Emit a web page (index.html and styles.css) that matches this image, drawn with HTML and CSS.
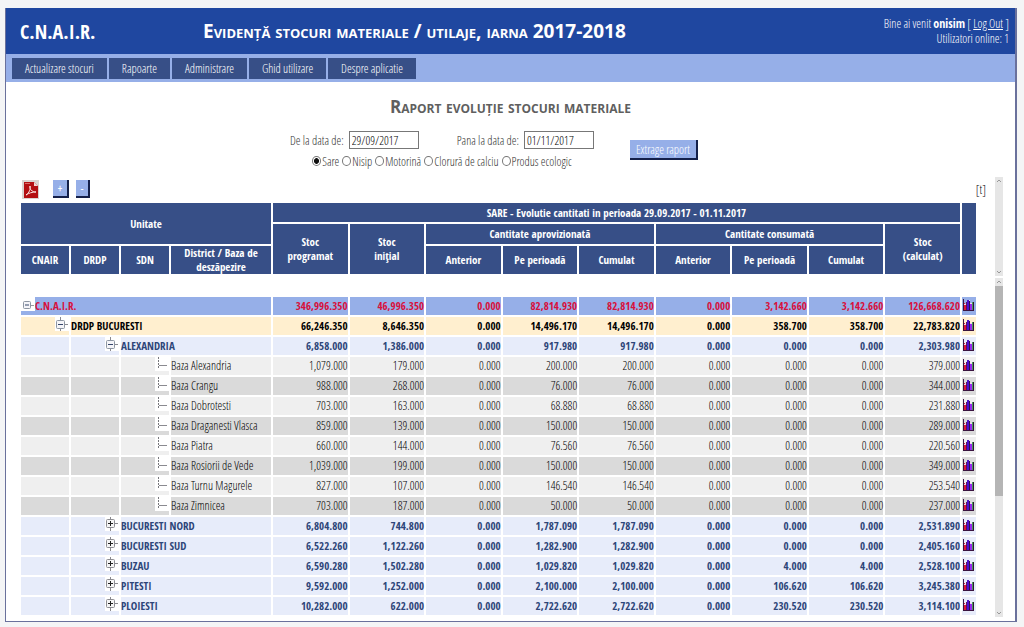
FILE: index.html
```html
<!DOCTYPE html>
<html lang="ro">
<head>
<meta charset="utf-8">
<title>C.N.A.I.R. - Raport evoluție stocuri materiale</title>
<link rel="stylesheet" href="styles.css">
</head>
<body>
<svg class="sprite" aria-hidden="true">
<symbol id="chart" viewBox="0 0 11 13">
<path fill="#e9d9ef" d="M1 5h2V3h2V1h2v3h4v7H1z"/>
<path fill="#3a1440" d="M0 0h1v12H0zM0 11h11v1H0z"/>
<path fill="#e01838" d="M1 4h1v1H1zM1 6h2v5H1z"/>
<path fill="#5a1060" d="M3 3h1v8H3z"/>
<path fill="#4c10d0" d="M4 1h2v10H4z"/>
<path fill="#33104f" d="M6 2h1v9H6z"/>
<path fill="#9a2bf0" d="M7 5h2v6H7z"/>
<path fill="#4c9a5c" d="M9 3h1v8H9z"/>
<path fill="#241a2e" d="M10 3h1v8h-1z"/>
</symbol>
<symbol id="minus-root" viewBox="0 0 14 14">
<path fill="#fff" d="M0 0h14v14H0z"/>
<rect x="2.500" y="4.500" width="7" height="7" rx="1" fill="#f4f4f8" stroke="#8d96a3"/>
<path fill="#34466b" d="M4 7.500h4v1H4z"/><path fill="#9a9aa0" d="M10 8h3v1h-3z"/>
</symbol>
<symbol id="minus" viewBox="0 0 14 14">
<path fill="#fff" d="M0 0h14v14H0z"/>
<path fill="#8a8a90" d="M5 0h1v14H5zM10 7h3v1h-3z"/>
<rect x="1.500" y="3.500" width="8" height="8" rx="1" fill="#f4f4f8" stroke="#8d96a3"/>
<path fill="#34466b" d="M3 7h5v1H3z"/>
</symbol>
<symbol id="plus" viewBox="0 0 14 14">
<path fill="#fff" d="M0 0h14v14H0z"/>
<path fill="#8a8a90" d="M5 0h1v14H5zM10 6h3v1h-3z"/>
<rect x="1.500" y="2.500" width="8" height="8" rx="1" fill="#f4f4f4" stroke="#8d8d92"/>
<path fill="#222" d="M3 6h5v1H3zM5 4h1v5H5z"/>
</symbol>
<symbol id="branch" viewBox="0 0 14 14">
<path fill="#fff" d="M0 0h14v14H0z"/>
<path fill="none" stroke="#77777c" stroke-dasharray="2 1" d="M3.500 0v11"/><path fill="#8a8a90" d="M4 8h8v1H4z"/>
</symbol>
</svg>
<div class="frame">
<header class="banner">
<div class="logo">C.N.A.I.R.</div>
<h1 class="app-title">Evidență stocuri materiale / utilaje, iarna 2017-2018</h1>
<div class="user">Bine ai venit <b>onisim</b> [ <a href="#">Log Out</a> ]<br>Utilizatori online: 1</div>
</header>
<nav class="menu">
<a href="#">Actualizare stocuri</a><a href="#">Rapoarte</a><a href="#">Administrare</a><a href="#">Ghid utilizare</a><a href="#">Despre aplicatie</a>
</nav>
<main>
<h2 class="report-title">Raport evoluție stocuri materiale</h2>
<form class="filters">
<div class="fields">
<div class="dates">
<div class="date"><label for="from">De la data de:</label><input id="from" type="text" value="29/09/2017"></div>
<div class="date"><label for="to">Pana la data de:</label><input id="to" type="text" value="01/11/2017"></div>
</div>
<div class="materials">
<label><input type="radio" name="m" checked>Sare</label>
<label><input type="radio" name="m">Nisip</label>
<label><input type="radio" name="m">Motorină</label>
<label><input type="radio" name="m">Clorură de calciu</label>
<label><input type="radio" name="m">Produs ecologic</label>
</div>
</div>
<button type="button" class="btn extract">Extrage raport</button>
</form>
<section class="panel">
<div class="panel-body">
<div class="tools">
<button type="button" class="pdf" aria-label="PDF"><svg viewBox="0 0 17 19" width="17" height="19"><path fill="#d9d3d0" d="M0 0h17v19H0z"/><path fill="#b30f12" d="M2 2h10l4 4v12H2z"/><path fill="#f1d4d2" d="M12 2v4h4z"/><path fill="#d86a66" d="M3 3h5v1H3z"/><path fill="none" stroke="#fbe3e1" d="M4 15c3-2 5-6 4-9-1 3 2 6 6 6-4 0-7 1-10 3z"/></svg></button>
<button type="button" class="btn fold">+</button>
<button type="button" class="btn fold short">-</button>
<span class="unit">[t]</span>
</div>
<table class="grid head">
<colgroup><col class="c-s"><col class="c-s"><col class="c-s"><col class="c-d"><col span="9"><col class="c-g"></colgroup>
<thead>
<tr class="h1"><th colspan="4" rowspan="2">Unitate</th><th colspan="9">SARE - Evolutie cantitati in perioada 29.09.2017 - 01.11.2017</th><th rowspan="3"></th></tr>
<tr class="h2"><th rowspan="2">Stoc<br>programat</th><th rowspan="2">Stoc<br>inițial</th><th colspan="3">Cantitate aprovizionată</th><th colspan="3">Cantitate consumată</th><th rowspan="2">Stoc<br>(calculat)</th></tr>
<tr class="h3"><th>CNAIR</th><th>DRDP</th><th>SDN</th><th>District / Baza de deszăpezire</th><th>Anterior</th><th>Pe perioadă</th><th>Cumulat</th><th>Anterior</th><th>Pe perioadă</th><th>Cumulat</th></tr>
</thead>
</table>
</div>
<div class="bar"><svg viewBox="0 0 8 8"><path d="M2 5l2-2 2 2"/></svg><svg viewBox="0 0 8 8"><path d="M2 3l2 2 2-2"/></svg></div>
</section>
<section class="panel">
<div class="panel-body list">
<table class="grid data">
<colgroup><col class="c-s"><col class="c-s"><col class="c-s"><col class="c-d"><col span="9"><col class="c-g"></colgroup>
<tbody>
<tr class="root"><td colspan="4" class="name"><svg class="node"><use href="#minus-root"/></svg>C.N.A.I.R.</td><td>346,996.350</td><td>46,996.350</td><td>0.000</td><td>82,814.930</td><td>82,814.930</td><td>0.000</td><td>3,142.660</td><td>3,142.660</td><td>126,668.620</td><td><svg class="chart"><use href="#chart"/></svg></td></tr>
<tr class="region"><td><svg class="node"><use href="#minus"/></svg></td><td colspan="3" class="name">DRDP BUCURESTI</td><td>66,246.350</td><td>8,646.350</td><td>0.000</td><td>14,496.170</td><td>14,496.170</td><td>0.000</td><td>358.700</td><td>358.700</td><td>22,783.820</td><td><svg class="chart"><use href="#chart"/></svg></td></tr>
<tr class="section"><td></td><td><svg class="node"><use href="#minus"/></svg></td><td colspan="2" class="name">ALEXANDRIA</td><td>6,858.000</td><td>1,386.000</td><td>0.000</td><td>917.980</td><td>917.980</td><td>0.000</td><td>0.000</td><td>0.000</td><td>2,303.980</td><td><svg class="chart"><use href="#chart"/></svg></td></tr>
<tr><td></td><td></td><td><svg class="node"><use href="#branch"/></svg></td><td class="name">Baza Alexandria</td><td>1,079.000</td><td>179.000</td><td>0.000</td><td>200.000</td><td>200.000</td><td>0.000</td><td>0.000</td><td>0.000</td><td>379.000</td><td><svg class="chart"><use href="#chart"/></svg></td></tr>
<tr class="alt"><td></td><td></td><td><svg class="node"><use href="#branch"/></svg></td><td class="name">Baza Crangu</td><td>988.000</td><td>268.000</td><td>0.000</td><td>76.000</td><td>76.000</td><td>0.000</td><td>0.000</td><td>0.000</td><td>344.000</td><td><svg class="chart"><use href="#chart"/></svg></td></tr>
<tr><td></td><td></td><td><svg class="node"><use href="#branch"/></svg></td><td class="name">Baza Dobrotesti</td><td>703.000</td><td>163.000</td><td>0.000</td><td>68.880</td><td>68.880</td><td>0.000</td><td>0.000</td><td>0.000</td><td>231.880</td><td><svg class="chart"><use href="#chart"/></svg></td></tr>
<tr class="alt"><td></td><td></td><td><svg class="node"><use href="#branch"/></svg></td><td class="name">Baza Draganesti Vlasca</td><td>859.000</td><td>139.000</td><td>0.000</td><td>150.000</td><td>150.000</td><td>0.000</td><td>0.000</td><td>0.000</td><td>289.000</td><td><svg class="chart"><use href="#chart"/></svg></td></tr>
<tr><td></td><td></td><td><svg class="node"><use href="#branch"/></svg></td><td class="name">Baza Piatra</td><td>660.000</td><td>144.000</td><td>0.000</td><td>76.560</td><td>76.560</td><td>0.000</td><td>0.000</td><td>0.000</td><td>220.560</td><td><svg class="chart"><use href="#chart"/></svg></td></tr>
<tr class="alt"><td></td><td></td><td><svg class="node"><use href="#branch"/></svg></td><td class="name">Baza Rosiorii de Vede</td><td>1,039.000</td><td>199.000</td><td>0.000</td><td>150.000</td><td>150.000</td><td>0.000</td><td>0.000</td><td>0.000</td><td>349.000</td><td><svg class="chart"><use href="#chart"/></svg></td></tr>
<tr><td></td><td></td><td><svg class="node"><use href="#branch"/></svg></td><td class="name">Baza Turnu Magurele</td><td>827.000</td><td>107.000</td><td>0.000</td><td>146.540</td><td>146.540</td><td>0.000</td><td>0.000</td><td>0.000</td><td>253.540</td><td><svg class="chart"><use href="#chart"/></svg></td></tr>
<tr class="alt"><td></td><td></td><td><svg class="node"><use href="#branch"/></svg></td><td class="name">Baza Zimnicea</td><td>703.000</td><td>187.000</td><td>0.000</td><td>50.000</td><td>50.000</td><td>0.000</td><td>0.000</td><td>0.000</td><td>237.000</td><td><svg class="chart"><use href="#chart"/></svg></td></tr>
<tr class="section"><td></td><td><svg class="node"><use href="#plus"/></svg></td><td colspan="2" class="name">BUCURESTI NORD</td><td>6,804.800</td><td>744.800</td><td>0.000</td><td>1,787.090</td><td>1,787.090</td><td>0.000</td><td>0.000</td><td>0.000</td><td>2,531.890</td><td><svg class="chart"><use href="#chart"/></svg></td></tr>
<tr class="section"><td></td><td><svg class="node"><use href="#plus"/></svg></td><td colspan="2" class="name">BUCURESTI SUD</td><td>6,522.260</td><td>1,122.260</td><td>0.000</td><td>1,282.900</td><td>1,282.900</td><td>0.000</td><td>0.000</td><td>0.000</td><td>2,405.160</td><td><svg class="chart"><use href="#chart"/></svg></td></tr>
<tr class="section"><td></td><td><svg class="node"><use href="#plus"/></svg></td><td colspan="2" class="name">BUZAU</td><td>6,590.280</td><td>1,502.280</td><td>0.000</td><td>1,029.820</td><td>1,029.820</td><td>0.000</td><td>4.000</td><td>4.000</td><td>2,528.100</td><td><svg class="chart"><use href="#chart"/></svg></td></tr>
<tr class="section"><td></td><td><svg class="node"><use href="#plus"/></svg></td><td colspan="2" class="name">PITESTI</td><td>9,592.000</td><td>1,252.000</td><td>0.000</td><td>2,100.000</td><td>2,100.000</td><td>0.000</td><td>106.620</td><td>106.620</td><td>3,245.380</td><td><svg class="chart"><use href="#chart"/></svg></td></tr>
<tr class="section"><td></td><td><svg class="node"><use href="#plus"/></svg></td><td colspan="2" class="name">PLOIESTI</td><td>10,282.000</td><td>622.000</td><td>0.000</td><td>2,722.620</td><td>2,722.620</td><td>0.000</td><td>230.520</td><td>230.520</td><td>3,114.100</td><td><svg class="chart"><use href="#chart"/></svg></td></tr>
</tbody>
</table>
</div>
<div class="bar"><svg viewBox="0 0 8 8"><path d="M2 5l2-2 2 2"/></svg><div class="thumb"></div><svg viewBox="0 0 8 8"><path d="M2 3l2 2 2-2"/></svg></div>
</section>
</main>
</div>
</body>
</html>
```
FILE: styles.css
```css
* { box-sizing: border-box; }
body {
  margin: 0;
  padding: 8px 7px 7px 5px;
  background: #f4f5f6;
  color: #000;
  font: 12px/15px "Open Sans Condensed Light", "Liberation Sans Narrow", "Noto Sans", sans-serif;
}
b, th, .logo, .root, .region, .section { font-family: "Open Sans Condensed", "Liberation Sans Narrow", "Noto Sans", sans-serif; font-weight: bold; }
th, .root, .region, .section { font-size: 11px; }
.sprite { display: none; }
.frame {
  background: #fff;
  border: solid #6a719c;
  border-width: 0 2px 1px 1px;
}
.banner {
  display: flex;
  align-items: center;
  height: 46px;
  padding: 0 6px 0 14px;
  background: #1f47a0;
  color: #fff;
}
.logo { flex: 0 0 183px; font-size: 20px; }
.app-title {
  margin: 0;
  font: bold small-caps 19px/24px "Open Sans", "Noto Sans", sans-serif;
  white-space: nowrap;
}
.user { margin-left: auto; text-align: right; white-space: nowrap; }
.user a { color: inherit; }
.menu {
  display: flex;
  gap: 2px;
  height: 28px;
  padding: 4px 6px 3px;
  background: #96afe8;
}
.menu a {
  padding: 3px 13px;
  background: #374f87;
  color: #fff;
  text-decoration: none;
}
.report-title {
  margin: 0;
  padding-top: 15px;
  font: bold small-caps 17px/20px "Open Sans", "Noto Sans", sans-serif;
  text-align: center;
  color: #5f5f5f;
}
.filters {
  display: flex;
  justify-content: center;
  align-items: center;
  gap: 36px;
  margin: 14px 33px 0 0;
  color: #333;
}
.dates { display: flex; gap: 38px; }
.date { display: flex; align-items: center; gap: 5px; }
.date input {
  width: 70px;
  height: 18px;
  padding: 0 2px;
  border: 1px solid #777;
  color: #000;
  font: inherit;
}
.materials { display: flex; justify-content: center; gap: 3px; margin-top: 5px; }
.materials label { display: flex; align-items: center; gap: 1px; }
.materials input {
  appearance: none;
  width: 9px;
  height: 10px;
  margin: 0 0 2px;
  border: 1px solid #777;
  border-radius: 50%;
}
.materials input:checked { background: radial-gradient(#111 45%, #fff 55%); }
.btn {
  padding: 0;
  border: solid #14204a;
  border-width: 0 2px 2px 0;
  background: #96afe8;
  color: #fff;
  font: inherit;
}
.extract { width: 68px; height: 20px; }
.panel { display: flex; justify-content: space-between; gap: 17px; padding: 0 12px 0 15px; margin-bottom: 2px; }
.panel + .panel { margin-bottom: 4px; }
.filters + .panel { margin-top: 8px; }
.panel-body { flex: 1; }
.tools { display: flex; align-items: center; height: 26px; margin-right: -8px; padding: 0 0 2px 1px; }
.pdf { display: flex; padding: 0; margin-right: 14px; border: 0; background: none; }
.fold { width: 16px; height: 18px; margin-right: 7px; font-size: 10px; font-weight: bold; line-height: 12px; }
.fold.short { width: 14px; }
.unit { margin-left: auto; }
.grid { width: 100%; table-layout: fixed; border-spacing: 0; }
.c-s { width: 50px; }
.c-d { width: 102px; }
.c-g { width: 16px; }
.grid th, .grid td {
  padding: 0;
  border: solid #fff;
  border-width: 0 2px 2px 0;
}
.grid th { background: #374f87; color: #fff; line-height: 14px; }
.h1 { height: 21px; }
.h2 { height: 22px; }
.h3 { height: 30px; }
.list { padding-top: 19px; }
.data tr { height: 20px; background: #efefef; }
.grid td { text-align: right; line-height: 18px; white-space: nowrap; }
.grid td:last-child { vertical-align: top; }
.data .name { text-align: left; }
.data .alt { background: #dadada; }
.data .root { background: #96afe8; color: #d8103c; }
.data .region { background: #ffefcf; color: #000; }
.data .section { background: #e7ecfa; color: #2d4578; }
.node { display: inline-block; width: 14px; height: 14px; vertical-align: top; }
.chart { display: block; width: 11px; height: 13px; margin: 2px 0 0 1px; }
.bar {
  display: flex;
  flex-direction: column;
  justify-content: space-between;
  width: 8px;
  background: #e6e6e6;
}
.bar svg { width: 8px; height: 8px; fill: none; stroke: #999; }
.thumb { height: 210px; margin-bottom: auto; background: #b5b5b5; }
```
